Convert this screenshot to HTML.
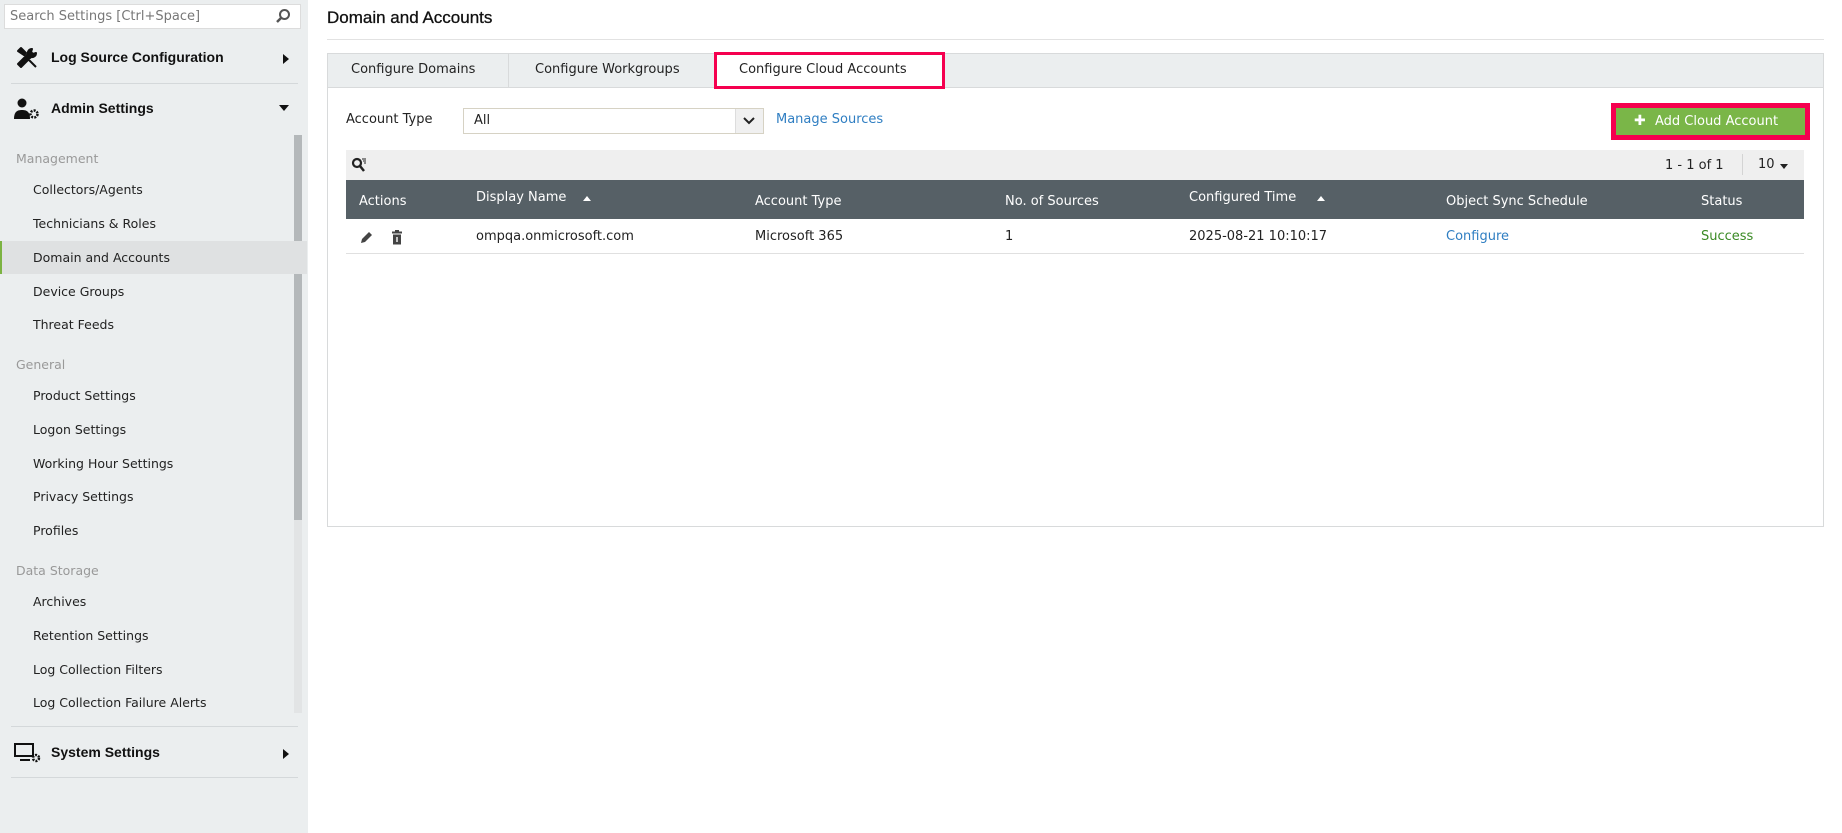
<!DOCTYPE html>
<html><head><meta charset="utf-8"><style>
*{box-sizing:border-box;margin:0;padding:0}
body{width:1842px;height:833px;overflow:hidden;background:#fff;font-family:"DejaVu Sans","Liberation Sans",sans-serif;font-size:13px;color:#222;position:relative}
.a{position:absolute;white-space:nowrap}
#side{position:absolute;left:0;top:0;width:308px;height:833px;background:#ebeeef}
.si{position:absolute;left:33px;font-size:12.5px;color:#222}
.sh{position:absolute;left:16px;font-size:12.5px;color:#999}
.hd{position:absolute;left:51px;font-family:"Liberation Sans",sans-serif;font-weight:bold;font-size:14px;color:#111}
.th{position:absolute;top:191px;color:#fff;font-size:13px}
.td{position:absolute;top:229px;font-size:13px;color:#222}
</style></head><body>
<div id="side">
  <div class="a" style="left:4px;top:4px;width:297px;height:25px;background:#fff;border:1px solid #dcdcdc"></div>
  <div class="a" style="left:10px;top:9px;font-size:13px;color:#777">Search Settings [Ctrl+Space]</div>
  <svg class="a" style="left:275px;top:8px" width="16" height="16" viewBox="0 0 16 16"><circle cx="9.5" cy="6.5" r="4.5" fill="none" stroke="#555" stroke-width="2"/><path d="M6.5 9.5L2 14" stroke="#555" stroke-width="2.5"/></svg>
  <svg class="a" style="left:15px;top:46px" width="24" height="24" viewBox="0 0 24 24"><path d="M3 5l3-3 5 5-2 2zM9 9L21 21M17 3a4 4 0 0 0-4 5L3 18l3 3 10-10a4 4 0 0 0 5-4l-3 1-2-2z" fill="#111" stroke="#111" stroke-width="2" stroke-linejoin="round"/></svg>
  <div class="hd" style="top:49px">Log Source Configuration</div>
  <div class="a" style="left:283px;top:54px;border-left:6px solid #111;border-top:5px solid transparent;border-bottom:5px solid transparent"></div>
  <div class="a" style="left:11px;top:83px;width:287px;height:1px;background:#d4d8da"></div>
  <svg class="a" style="left:14px;top:98px" width="26" height="22" viewBox="0 0 26 22"><circle cx="8" cy="5" r="4.5" fill="#111"/><path d="M0 21c0-7 3-9 8-9s8 2 8 9z" fill="#111"/><circle cx="20" cy="16" r="3.5" fill="none" stroke="#111" stroke-width="2.5" stroke-dasharray="2 1.2"/></svg>
  <div class="hd" style="top:100px">Admin Settings</div>
  <div class="a" style="left:279px;top:105px;border-top:6px solid #111;border-left:5px solid transparent;border-right:5px solid transparent"></div>
  <div class="a" style="left:294px;top:135px;width:8px;height:578px;background:#e2e4e5"></div>
  <div class="a" style="left:294px;top:135px;width:8px;height:385px;background:#b4b8ba"></div>
  <div class="sh" style="top:151px">Management</div>
  <div class="si" style="top:182px">Collectors/Agents</div>
  <div class="si" style="top:216px">Technicians &amp; Roles</div>
  <div class="a" style="left:0;top:241px;width:307px;height:33px;background:#dfe1e2;border-left:2px solid #7cb342"></div>
  <div class="si" style="top:250px">Domain and Accounts</div>
  <div class="si" style="top:284px">Device Groups</div>
  <div class="si" style="top:317px">Threat Feeds</div>
  <div class="sh" style="top:357px">General</div>
  <div class="si" style="top:388px">Product Settings</div>
  <div class="si" style="top:422px">Logon Settings</div>
  <div class="si" style="top:456px">Working Hour Settings</div>
  <div class="si" style="top:489px">Privacy Settings</div>
  <div class="si" style="top:523px">Profiles</div>
  <div class="sh" style="top:563px">Data Storage</div>
  <div class="si" style="top:594px">Archives</div>
  <div class="si" style="top:628px">Retention Settings</div>
  <div class="si" style="top:662px">Log Collection Filters</div>
  <div class="si" style="top:695px">Log Collection Failure Alerts</div>
  <div class="a" style="left:11px;top:726px;width:287px;height:1px;background:#d4d8da"></div>
  <svg class="a" style="left:14px;top:743px" width="27" height="20" viewBox="0 0 27 20"><rect x="1" y="1" width="18" height="12" fill="none" stroke="#111" stroke-width="2"/><path d="M6 17h10" stroke="#111" stroke-width="2"/><circle cx="22" cy="15" r="3" fill="none" stroke="#111" stroke-width="2.5" stroke-dasharray="2 1.2"/></svg>
  <div class="hd" style="top:744px">System Settings</div>
  <div class="a" style="left:283px;top:749px;border-left:6px solid #111;border-top:5px solid transparent;border-bottom:5px solid transparent"></div>
  <div class="a" style="left:11px;top:777px;width:287px;height:1px;background:#d4d8da"></div>
</div>

<div class="a" style="left:327px;top:8px;font-family:'Liberation Sans',sans-serif;font-size:17px;color:#111;-webkit-text-stroke:0.3px #111">Domain and Accounts</div>
<div class="a" style="left:327px;top:39px;width:1497px;height:1px;background:#e2e2e2"></div>

<div class="a" style="left:327px;top:53px;width:1497px;height:474px;border:1px solid #d8dadb;background:#fff"></div>
<div class="a" style="left:328px;top:54px;width:1495px;height:34px;background:#ebeeef;border-bottom:1px solid #d8dadb"></div>
<div class="a" style="left:508px;top:54px;width:1px;height:34px;background:#d8dadb"></div>
<div class="a" style="left:351px;top:62px">Configure Domains</div>
<div class="a" style="left:535px;top:62px">Configure Workgroups</div>
<div class="a" style="left:714px;top:52px;width:231px;height:37px;background:#fff;border:3px solid #f5004f"></div>
<div class="a" style="left:739px;top:62px">Configure Cloud Accounts</div>

<div class="a" style="left:346px;top:112px">Account Type</div>
<div class="a" style="left:463px;top:108px;width:301px;height:26px;border:1px solid #d6d2c4;background:#fff"></div>
<div class="a" style="left:474px;top:113px">All</div>
<div class="a" style="left:735px;top:109px;width:28px;height:24px;background:#f0f0f0;border-left:1px solid #ddd"></div>
<svg class="a" style="left:742px;top:115px" width="14" height="12" viewBox="0 0 14 12"><path d="M2 3l5 5 5-5" fill="none" stroke="#222" stroke-width="2"/></svg>
<div class="a" style="left:776px;top:112px;color:#2f7ec2">Manage Sources</div>

<div class="a" style="left:1611px;top:103px;width:199px;height:37px;background:#f5004f"></div>
<div class="a" style="left:1616px;top:108px;width:189px;height:27px;background:#7ab648"></div>
<div class="a" style="left:1634px;top:113px;color:#fff;font-size:14px;font-weight:bold">✚</div>
<div class="a" style="left:1655px;top:114px;color:#fff">Add Cloud Account</div>

<div class="a" style="left:346px;top:150px;width:1458px;height:30px;background:#efefef"></div>
<svg class="a" style="left:351px;top:157px" width="18" height="16" viewBox="0 0 18 16"><circle cx="6" cy="6" r="4" fill="none" stroke="#222" stroke-width="2.2"/><path d="M9 9l4 5" stroke="#222" stroke-width="2.5"/><path d="M11 2h4M12 4h3M13 6h2" stroke="#222" stroke-width="1"/></svg>
<div class="a" style="left:1665px;top:158px">1 - 1 of 1</div>
<div class="a" style="left:1742px;top:154px;width:1px;height:21px;background:#d4d4d4"></div>
<div class="a" style="left:1758px;top:157px">10</div>
<div class="a" style="left:1780px;top:164px;border-top:5px solid #222;border-left:4px solid transparent;border-right:4px solid transparent"></div>

<div class="a" style="left:346px;top:180px;width:1458px;height:39px;background:#566066"></div>
<div class="th" style="left:359px;top:194px">Actions</div>
<div class="th" style="left:476px;top:190px">Display Name</div>
<div class="a" style="left:583px;top:196px;border-bottom:5px solid #fff;border-left:4px solid transparent;border-right:4px solid transparent"></div>
<div class="th" style="left:755px;top:194px">Account Type</div>
<div class="th" style="left:1005px;top:194px">No. of Sources</div>
<div class="th" style="left:1189px;top:190px">Configured Time</div>
<div class="a" style="left:1317px;top:196px;border-bottom:5px solid #fff;border-left:4px solid transparent;border-right:4px solid transparent"></div>
<div class="th" style="left:1446px;top:194px">Object Sync Schedule</div>
<div class="th" style="left:1701px;top:194px">Status</div>

<div class="a" style="left:346px;top:253px;width:1458px;height:1px;background:#e0e0e0"></div>
<svg class="a" style="left:359px;top:231px" width="14" height="14" viewBox="0 0 14 14"><path d="M2 12l1-4 7-7 3 3-7 7z" fill="#444"/></svg>
<svg class="a" style="left:391px;top:230px" width="12" height="15" viewBox="0 0 12 15"><rect x="1" y="1.5" width="10" height="2" fill="#444"/><rect x="4" y="0" width="4" height="2" fill="#444"/><rect x="2" y="4.5" width="8" height="10" fill="#444"/><rect x="5.3" y="7" width="1.4" height="5" fill="#fff"/></svg>
<div class="td" style="left:476px">ompqa.onmicrosoft.com</div>
<div class="td" style="left:755px">Microsoft 365</div>
<div class="td" style="left:1005px">1</div>
<div class="td" style="left:1189px">2025-08-21 10:10:17</div>
<div class="td" style="left:1446px;color:#2f7ec2">Configure</div>
<div class="td" style="left:1701px;color:#3a8a24">Success</div>
</body></html>
